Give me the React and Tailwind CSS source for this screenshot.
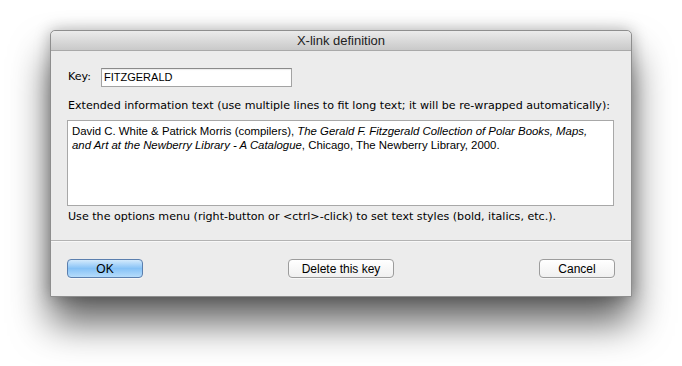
const ui = { fontFamily: '"Liberation Sans", Arial, sans-serif' };
const label = { fontFamily: '"DejaVu Sans", "Liberation Sans", sans-serif' };

function MacButton({ children, primary, width }) {
  return (
    <button
      className={
        primary
          ? 'h-[19px] rounded-[4px] border border-[#5b7fae] bg-gradient-to-b from-[#d3eafc] via-[#86c2f6] to-[#b5dcfb] text-[12px] leading-none text-black shadow-[0_1px_0_rgba(255,255,255,0.6)]'
          : 'h-[19px] rounded-[4px] border border-[#9c9c9c] bg-gradient-to-b from-white to-[#f0f0f0] text-[12px] leading-none text-black shadow-[0_1px_0_rgba(255,255,255,0.6)]'
      }
      style={{ ...ui, width }}
    >
      {children}
    </button>
  );
}

export default function App() {
  return (
    <div className="w-[682px] h-[366px] bg-white pt-[30px] pl-[50px]" style={ui}>
      <div className="w-[582px] h-[267px] flex flex-col rounded-t-[5px] border border-[#8e8e8e] bg-[#ececec] shadow-[0_26px_38px_rgba(0,0,0,0.62),0_0_16px_rgba(0,0,0,0.28)]">
        <div className="h-[20px] shrink-0 flex items-center justify-center rounded-t-[5px] border-b border-[#a9a9a9] bg-gradient-to-b from-[#ebebeb] to-[#c9c9c9] text-[13px] text-[#222]">
          X-link definition
        </div>

        <div className="flex flex-col px-[16px] pt-[17px] text-[11.1px] text-black" style={label}>
          <div className="flex items-center gap-[9px]">
            <span className="w-[25px] pl-[1px]">Key:</span>
            <div
              className="w-[191px] h-[19px] flex items-center bg-white border border-[#a3a3a3] border-t-[#8a8a8a] pl-[2px] text-[11px] shadow-[inset_0_1px_1px_rgba(0,0,0,0.08)]"
              style={ui}
            >
              FITZGERALD
            </div>
          </div>

          <p className="mt-[12px] leading-[14px] pl-[1px] whitespace-nowrap">
            Extended information text (use multiple lines to fit long text; it will be re-wrapped automatically):
          </p>

          <div
            className="mt-[7px] w-[547px] h-[86px] bg-white border border-[#a8a8a8] px-[4px] pt-[3px] text-[11.4px] leading-[14px] text-black whitespace-nowrap"
            style={ui}
          >
            David C. White &amp; Patrick Morris (compilers), <i>The Gerald F. Fitzgerald Collection of Polar Books, Maps,</i>
            <br />
            <i>and Art at the Newberry Library - A Catalogue</i>, Chicago, The Newberry Library, 2000.
          </div>

          <p className="mt-[4px] leading-[14px] pl-[1px] whitespace-nowrap">
            Use the options menu (right-button or &lt;ctrl&gt;-click) to set text styles (bold, italics, etc.).
          </p>
        </div>

        <div className="mt-[16px] border-t border-[#b3b3b3] shadow-[0_1px_0_#f8f8f8]" />

        <div className="flex items-center justify-between px-[16px] mt-[18px]">
          <MacButton primary width={76}>OK</MacButton>
          <MacButton width={106}>Delete this key</MacButton>
          <MacButton width={76}>Cancel</MacButton>
        </div>
      </div>
    </div>
  );
}
